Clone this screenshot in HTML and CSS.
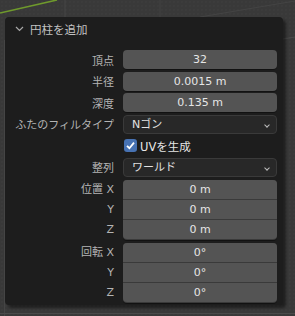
FILE: index.html
```html
<!DOCTYPE html>
<html lang="ja">
<head>
  <meta charset="UTF-8">
  <title>円柱を追加</title>
  <link rel="stylesheet" href="styles.css">
</head>
<body>
  <div class="viewport">
    <!-- viewport grid behind the panel -->
    <svg class="grid" width="295" height="316" viewBox="0 0 295 316">
      <line x1="65" y1="0" x2="65" y2="17" stroke="#474747" stroke-width="1"/>
      <line x1="160" y1="0" x2="160" y2="17" stroke="#434343" stroke-width="1"/>
      <line x1="200" y1="17" x2="295" y2="1" stroke="#444" stroke-width="1"/>
      <line x1="283" y1="39" x2="295" y2="37" stroke="#4a4a4a" stroke-width="1"/>
      <line x1="4.5" y1="40" x2="4.5" y2="316" stroke="#454545" stroke-width="1"/>
      <line x1="0" y1="313.5" x2="295" y2="313.5" stroke="#4a4a4a" stroke-width="1"/>
      <line x1="0" y1="13" x2="57" y2="0" stroke="#6f9a2c" stroke-width="1.6"/>
    </svg>

    <div class="panel">
      <div class="panel-header">
        <svg class="chev" width="9" height="6" viewBox="0 0 9 6">
          <path d="M1 1 L4.5 4.5 L8 1" fill="none" stroke="#a8a8a8" stroke-width="1.2"/>
        </svg>
        <span>円柱を追加</span>
      </div>

      <div class="panel-body">
        <div class="row">
          <label>頂点</label>
          <div class="num">32</div>
        </div>
        <div class="row">
          <label>半径</label>
          <div class="num">0.0015 m</div>
        </div>
        <div class="row">
          <label>深度</label>
          <div class="num">0.135 m</div>
        </div>
        <div class="row">
          <label>ふたのフィルタイプ</label>
          <div class="select">Nゴン<span class="arrow"></span></div>
        </div>
        <div class="row">
          <label></label>
          <div class="check">
            <span class="box">
              <svg width="13" height="13" viewBox="0 0 13 13">
                <path d="M3 6.8 L5.4 9.2 L10 3.6" fill="none" stroke="#fff" stroke-width="1.8"/>
              </svg>
            </span>
            UVを生成
          </div>
        </div>
        <div class="row">
          <label>整列</label>
          <div class="select">ワールド<span class="arrow"></span></div>
        </div>

        <div class="row vec">
          <div class="vec-labels">
            <label>位置 X</label>
            <label>Y</label>
            <label>Z</label>
          </div>
          <div class="stack">
            <div class="num">0 m</div>
            <div class="num">0 m</div>
            <div class="num">0 m</div>
          </div>
        </div>

        <div class="row vec">
          <div class="vec-labels">
            <label>回転 X</label>
            <label>Y</label>
            <label>Z</label>
          </div>
          <div class="stack">
            <div class="num">0°</div>
            <div class="num">0°</div>
            <div class="num">0°</div>
          </div>
        </div>
      </div>
    </div>
  </div>
</body>
</html>
```

FILE: styles.css
```css
* {
  margin: 0;
  padding: 0;
  box-sizing: border-box;
}

body {
  font-family: "DejaVu Sans", "Noto Sans CJK JP", sans-serif;
  font-size: 11px;
  background: #393939;
  overflow: hidden;
}

.viewport {
  position: relative;
  width: 295px;
  height: 316px;
  padding: 17px 0 0 5px;
  background-color: #393939;
  background-image: radial-gradient(#3e3e3e 0.6px, transparent 0.8px);
  background-size: 4px 4px;
}

.grid {
  position: absolute;
  left: 0;
  top: 0;
}

/* Operator panel */
.panel {
  position: relative;
  width: 278px;
  height: 288px;
  background: #1d1d1d;
  border-radius: 4px;
  box-shadow: 3px 3px 3px rgba(0, 0, 0, 0.45);
}

.panel-header {
  display: flex;
  align-items: center;
  height: 22px;
  padding: 1px 0 0 10px;
  color: #c2c2c2;
  font-size: 11.5px;
}

.chev {
  margin-right: 6px;
}

.panel-body {
  display: flex;
  flex-direction: column;
  gap: 2.5px;
  padding: 11px 6px 0 0;
}

.row {
  display: grid;
  grid-template-columns: 109px 154px;
  column-gap: 9px;
  align-items: center;
  height: 19px;
}

.row label {
  text-align: right;
  color: #b4b4b4;
  white-space: nowrap;
}

.num {
  height: 19px;
  line-height: 19px;
  text-align: center;
  background: #545454;
  color: #e6e6e6;
  border-radius: 4px;
  box-shadow: 0 1px 0 rgba(0, 0, 0, 0.35);
}

.select {
  position: relative;
  height: 19px;
  line-height: 17px;
  padding-left: 8px;
  background: #282828;
  border: 1px solid #3a3a3a;
  border-radius: 4px;
  color: #e2e2e2;
}

.arrow {
  position: absolute;
  right: 7px;
  top: 7px;
  width: 4px;
  height: 4px;
  border-right: 1px solid #bdbdbd;
  border-bottom: 1px solid #bdbdbd;
  transform: rotate(45deg);
}

.check {
  display: flex;
  align-items: center;
  gap: 3px;
  padding-left: 1px;
  color: #e6e6e6;
  font-size: 11.5px;
}

.box {
  display: block;
  width: 13px;
  height: 13px;
  background: #4772b3;
  border-radius: 3px;
}

.box svg {
  display: block;
}

/* Vector fields (X / Y / Z) */
.row.vec {
  height: 59px;
  margin-top: 1px;
  align-items: stretch;
}

.vec-labels {
  display: flex;
  flex-direction: column;
}

.vec-labels label {
  height: 20px;
  line-height: 19px;
}

.stack {
  display: flex;
  flex-direction: column;
  gap: 1px;
  background: #3a3a3a;
  border-radius: 4px;
  box-shadow: 0 1px 0 rgba(0, 0, 0, 0.35);
}

.stack .num {
  border-radius: 0;
  box-shadow: none;
}

.stack .num:first-child {
  border-radius: 4px 4px 0 0;
}

.stack .num:last-child {
  border-radius: 0 0 4px 4px;
}
```
